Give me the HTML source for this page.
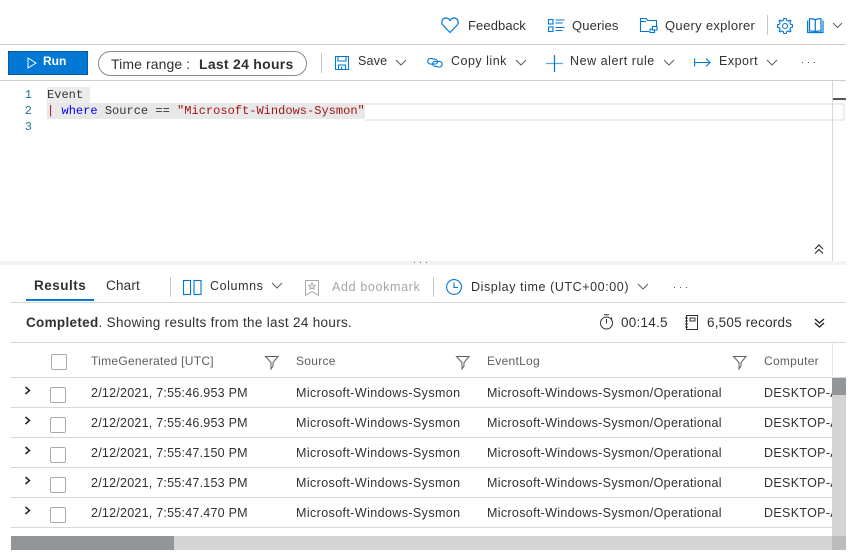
<!DOCTYPE html>
<html><head><meta charset="utf-8">
<style>
html,body{margin:0;padding:0;background:#fff;width:852px;height:559px;overflow:hidden}
body{position:relative;font-family:"Liberation Sans",sans-serif;color:#323130}
.t{position:absolute;white-space:nowrap;line-height:16px;font-size:13px}
.b{position:absolute}
svg{position:absolute;overflow:visible;fill:none}
.m{font-family:"Liberation Mono",monospace;font-size:12px;position:absolute;white-space:pre;line-height:16px}
.r{font-size:12.5px;color:#323130}
.d{letter-spacing:.24px}
.s{letter-spacing:.4px}
.e{letter-spacing:.33px}
.h{font-size:12px;color:#605e5c;letter-spacing:.28px}
.cb{position:absolute;width:14px;height:14px;border:1px solid #a6abb3;border-radius:2px;background:#fff}
.tb{font-size:12.5px}
</style></head><body>

<!-- top bar -->
<svg style="left:441px;top:17px" width="18" height="17" stroke="#0078d4" stroke-width="1.2"><path d="M9 15.5 L1.800 8 C-.5 5 1.500 1 5 1 C7 1 8.200 2 9 3.500 C9.800 2 11 1 13 1 C16.500 1 18.500 5 16.200 8 Z"/></svg>
<div class="t" style="left:468px;top:18px;letter-spacing:.1px">Feedback</div>
<svg style="left:548px;top:19px" width="17" height="14" stroke="#0078d4" stroke-width="1.1"><rect x=".5" y=".5" width="4.500" height="4.500"/><rect x=".5" y="8" width="4.500" height="4.500"/><path d="M7.500 1h9M7.500 4h7M7.500 8.500h9M7.500 11.500h7"/></svg>
<div class="t" style="left:572px;top:18px;letter-spacing:.15px">Queries</div>
<svg style="left:640px;top:18px" width="18" height="16" stroke="#0078d4" stroke-width="1.1"><path d="M9 13.500H.5V.5H6L7.500 2.500H16.500V9"/><path d="M.5 3.500H6"/><rect x="10" y="11" width="4.500" height="3.500"/><rect x="12.500" y="8.500" width="4.500" height="3.500" fill="#fff"/></svg>
<div class="t" style="left:665px;top:18px;letter-spacing:.3px">Query explorer</div>
<div class="b" style="left:767px;top:15px;width:1px;height:20px;background:#c8c8c8"></div>
<svg style="left:777px;top:18px" width="16" height="16" stroke="#0078d4" stroke-width="1.1"><circle cx="8" cy="8" r="2.500"/><path d="M6.800 .5H9.200L9.700 2.400 11.300 3.100 13 2.100 13.900 3 12.900 4.700 13.600 6.300 15.500 6.800V9.200L13.600 9.700 12.900 11.300 13.900 13 13 13.900 11.300 12.900 9.700 13.600 9.200 15.500H6.800L6.300 13.600 4.700 12.900 3 13.900 2.100 13 3.100 11.300 2.400 9.700 .5 9.200V6.800L2.400 6.300 3.100 4.700 2.100 3 3 2.100 4.700 3.100 6.300 2.400Z"/></svg>
<svg style="left:807px;top:18px" width="17" height="16" stroke="#0078d4" stroke-width="1.200"><path d="M.6 2.500V14.500H16V2.500"/><path d="M2.500 13V.8C5 .6 7 .8 8.300 2C9.600 .8 11.600 .6 14 .8V13C11.600 12.800 9.600 13 8.300 14C7 13 5 12.800 2.500 13ZM8.300 2V14"/></svg>
<svg style="left:832px;top:22px" width="11" height="7" stroke="#605e5c" stroke-width="1"><path d="M1 1l4.500 4.500L10 1"/></svg>

<div class="b" style="left:0;top:44px;width:846px;height:1px;background:#cfcfcf"></div>

<!-- toolbar -->
<div class="b" style="left:8px;top:51px;width:80px;height:24px;background:#0078d4;outline:1px dotted #0b3f78;outline-offset:-1px"></div>
<svg style="left:27px;top:57px" width="10" height="12" stroke="#fff" stroke-width="1"><path d="M1 1L9 6L1 11Z"/></svg>
<div class="t" style="left:43px;top:53px;color:#fff;font-weight:bold;font-size:12px">Run</div>
<div class="b" style="left:98px;top:51px;width:207px;height:23px;border:1px solid #8a8886;border-radius:13px"></div>
<div class="t" style="left:111px;top:56px;font-size:14px;letter-spacing:.1px">Time range :</div>
<div class="t" style="left:199px;top:56px;font-size:14px;font-weight:bold;letter-spacing:.27px">Last 24 hours</div>
<div class="b" style="left:321px;top:53px;width:1px;height:20px;background:#c8c8c8"></div>
<svg style="left:335px;top:56px" width="14" height="14" stroke="#0078d4" stroke-width="1.100"><path d="M.5.500H13.500V13.500H.5ZM3 .5V5H11V.5M3.500 13.500V9H10.500V13.500M6.500 10.500V13"/></svg>
<div class="t tb" style="left:358px;top:53px;letter-spacing:.2px">Save</div>
<svg style="left:395px;top:59px" width="12" height="7" stroke="#605e5c" stroke-width="1"><path d="M1 1l5 5 5-5"/></svg>
<svg style="left:427px;top:56px" width="16" height="13" stroke="#0078d4" stroke-width="1.100"><path d="M6 2.500H3.500a2.800 2.800 0 0 0 0 5.600H8a2.500 2.500 0 0 0 0-5H5.500"/><path d="M10 10.500h2.500a2.800 2.800 0 0 0 0-5.600H8a2.500 2.500 0 0 0 0 5h2.500" transform="translate(0 .5)"/></svg>
<div class="t tb" style="left:451px;top:53px;letter-spacing:.5px">Copy link</div>
<svg style="left:515px;top:59px" width="12" height="7" stroke="#605e5c" stroke-width="1"><path d="M1 1l5 5 5-5"/></svg>
<svg style="left:546px;top:55px" width="17" height="17" stroke-width="1.200"><path d="M0 8.500H17" stroke="#5aa9e6"/><path d="M8.500 0V17" stroke="#0078d4"/></svg>
<div class="t tb" style="left:570px;top:53px;letter-spacing:.55px">New alert rule</div>
<svg style="left:663px;top:59px" width="12" height="7" stroke="#605e5c" stroke-width="1"><path d="M1 1l5 5 5-5"/></svg>
<svg style="left:694px;top:57px" width="17" height="11" stroke="#0078d4" stroke-width="1.100"><path d="M.6 1.500V9.500M.6 5.500H16M12 1.500l4 4-4 4"/></svg>
<div class="t tb" style="left:719px;top:53px;letter-spacing:.5px">Export</div>
<svg style="left:766px;top:59px" width="12" height="7" stroke="#605e5c" stroke-width="1"><path d="M1 1l5 5 5-5"/></svg>
<svg style="left:801px;top:62px" width="15" height="2" fill="none"><path d="M1 0h1v1H1zM7 0h1v1H7zM13 0h1v1h-1z" fill="#555"/></svg>

<div class="b" style="left:0;top:80px;width:846px;height:1px;background:#cfcfcf"></div>

<!-- editor -->
<div class="b" style="left:47px;top:87px;width:43px;height:16px;background:#ececec"></div>
<div class="b" style="left:47px;top:103px;width:318px;height:16px;background:#e8e8e8"></div>
<div class="b" style="left:365px;top:103px;width:478px;height:14px;border:2px solid #eeeeee;border-left:0"></div>
<div class="b" style="left:832px;top:81px;width:1px;height:180px;background:#d8d8d8"></div>
<div class="b" style="left:833px;top:98px;width:13px;height:2px;background:#555"></div>
<div class="m" style="left:24px;top:87px;color:#237893;width:8px;text-align:right">1</div>
<div class="m" style="left:24px;top:103px;color:#237893;width:8px;text-align:right">2</div>
<div class="m" style="left:24px;top:119px;color:#237893;width:8px;text-align:right">3</div>
<div class="m" style="left:47px;top:87px;color:#333;letter-spacing:.02px">Event</div>
<div class="m" style="left:47px;top:103px;letter-spacing:.02px"><span style="color:#a31515">|</span> <span style="color:#0000ff">where</span> <span style="color:#333">Source == </span><span style="color:#a31515">"Microsoft-Windows-Sysmon"</span></div>
<svg style="left:814px;top:244px" width="10" height="10" stroke="#333" stroke-width="1.200"><path d="M1 5l4-4 4 4M1 9.500l4-4 4 4"/></svg>

<!-- splitter -->
<div class="b" style="left:0;top:261px;width:846px;height:4px;background:#f3f3f3"></div>
<svg style="left:414px;top:262px" width="14" height="2"><path d="M0 0h1v1H0zM6 0h1v1H6zM12 0h1v1h-1z" fill="#666"/></svg>

<!-- results tabs -->
<div class="t" style="left:34px;top:278px;font-weight:bold;font-size:13.500px;letter-spacing:.5px">Results</div>
<div class="t" style="left:106px;top:278px;font-size:13.500px;letter-spacing:.2px">Chart</div>
<div class="b" style="left:26px;top:299px;width:68px;height:2px;background:#0078d4"></div>
<div class="b" style="left:11px;top:302px;width:835px;height:1px;background:#d6d6d6"></div>
<div class="b" style="left:170px;top:277px;width:1px;height:20px;background:#c8c8c8"></div>
<svg style="left:183px;top:280px" width="19" height="15" stroke="#0078d4" stroke-width="1.100"><rect x=".5" y=".5" width="7" height="14"/><rect x="11" y=".5" width="7" height="14"/></svg>
<div class="t tb" style="left:210px;top:278px;letter-spacing:.6px">Columns</div>
<svg style="left:271px;top:282px" width="12" height="7" stroke="#605e5c" stroke-width="1"><path d="M1 1l5 5 5-5"/></svg>
<svg style="left:305px;top:280px" width="14" height="16" stroke="#a8a8a8" stroke-width="1"><path d="M.5.500H13.500V15.500L7 11.500L.5 15.500Z"/><path d="M7 3l1 2.200 2.200.2-1.700 1.500.5 2.200L7 7.900 5 9.100l.5-2.200L3.800 5.400 6 5.200Z"/></svg>
<div class="t tb" style="left:332px;top:279px;letter-spacing:.65px;color:#a6a6a6">Add bookmark</div>
<div class="b" style="left:433px;top:277px;width:1px;height:20px;background:#c8c8c8"></div>
<svg style="left:446px;top:279px" width="16" height="16" stroke="#0078d4" stroke-width="1.100"><circle cx="8" cy="8" r="7.400"/><path d="M8 3.500V8.500H12"/></svg>
<div class="t tb" style="left:471px;top:279px;letter-spacing:.58px">Display time (UTC+00:00)</div>
<svg style="left:637px;top:283px" width="12" height="7" stroke="#605e5c" stroke-width="1"><path d="M1 1l5 5 5-5"/></svg>
<svg style="left:673px;top:287px" width="15" height="2"><path d="M1 0h1v1H1zM7 0h1v1H7zM13 0h1v1h-1z" fill="#555"/></svg>

<!-- status -->
<div class="t" style="left:26px;top:315px;font-size:13.500px;letter-spacing:.31px"><b>Completed</b>. Showing results from the last 24 hours.</div>
<svg style="left:599px;top:314px" width="15" height="16" stroke="#323130" stroke-width="1"><circle cx="7.500" cy="9" r="6"/><path d="M7.500 5V9.500M5 .8H10M12 3.500l1.200 1.200"/></svg>
<div class="t" style="left:621px;top:315px;font-size:13.500px;letter-spacing:.25px">00:14.5</div>
<svg style="left:685px;top:315px" width="13" height="15" stroke="#323130" stroke-width="1"><path d="M1.500.5H12.500V14.500H1.500ZM0 3H3M0 6H3M0 9H3M0 12H3M5 3H10V6H5Z"/></svg>
<div class="t" style="left:707px;top:315px;font-size:13.500px;letter-spacing:.2px">6,505 records</div>
<svg style="left:814px;top:318px" width="11" height="10" stroke="#222" stroke-width="1.300"><path d="M1 1l4.500 4L10 1M1 5l4.500 4L10 5"/></svg>
<div class="b" style="left:11px;top:342px;width:835px;height:1px;background:#d6d6d6"></div>

<!-- header -->
<div class="cb" style="left:51px;top:354px"></div>
<div class="t h" style="left:91px;top:353px">TimeGenerated [UTC]</div>
<svg style="left:265px;top:356px" width="14" height="14" stroke="#605e5c" stroke-width="1"><path d="M.5.500H13L8 6.500V10L6 13V6.500Z"/></svg>
<div class="t h" style="left:296px;top:353px">Source</div>
<svg style="left:456px;top:356px" width="14" height="14" stroke="#605e5c" stroke-width="1"><path d="M.5.500H13L8 6.500V10L6 13V6.500Z"/></svg>
<div class="t h" style="left:487px;top:353px">EventLog</div>
<svg style="left:733px;top:356px" width="14" height="14" stroke="#605e5c" stroke-width="1"><path d="M.5.500H13L8 6.500V10L6 13V6.500Z"/></svg>
<div class="t h" style="left:764px;top:353px">Computer</div>
<div class="b" style="left:11px;top:377px;width:835px;height:1px;background:#d6d6d6"></div>
<div class="b" style="left:832px;top:343px;width:1px;height:35px;background:#e6e6e6"></div>

<!-- rows -->
<svg style="left:24px;top:386px" width="8" height="10" stroke="#222" stroke-width="1.500"><path d="M1.500 1l4 3.500-4 3.500"/></svg>
<div class="cb" style="left:50px;top:387px"></div>
<div class="t r d" style="left:91px;top:385px">2/12/2021, 7:55:46.953 PM</div>
<div class="t r s" style="left:296px;top:385px">Microsoft-Windows-Sysmon</div>
<div class="t r e" style="left:487px;top:385px">Microsoft-Windows-Sysmon/Operational</div>
<div class="t r e" style="left:764px;top:385px">DESKTOP-A</div>
<div class="b" style="left:11px;top:407px;width:821px;height:1px;background:#d6d6d6"></div>

<svg style="left:24px;top:416px" width="8" height="10" stroke="#222" stroke-width="1.500"><path d="M1.500 1l4 3.500-4 3.500"/></svg>
<div class="cb" style="left:50px;top:417px"></div>
<div class="t r d" style="left:91px;top:415px">2/12/2021, 7:55:46.953 PM</div>
<div class="t r s" style="left:296px;top:415px">Microsoft-Windows-Sysmon</div>
<div class="t r e" style="left:487px;top:415px">Microsoft-Windows-Sysmon/Operational</div>
<div class="t r e" style="left:764px;top:415px">DESKTOP-A</div>
<div class="b" style="left:11px;top:437px;width:821px;height:1px;background:#d6d6d6"></div>

<svg style="left:24px;top:446px" width="8" height="10" stroke="#222" stroke-width="1.500"><path d="M1.500 1l4 3.500-4 3.500"/></svg>
<div class="cb" style="left:50px;top:447px"></div>
<div class="t r d" style="left:91px;top:445px">2/12/2021, 7:55:47.150 PM</div>
<div class="t r s" style="left:296px;top:445px">Microsoft-Windows-Sysmon</div>
<div class="t r e" style="left:487px;top:445px">Microsoft-Windows-Sysmon/Operational</div>
<div class="t r e" style="left:764px;top:445px">DESKTOP-A</div>
<div class="b" style="left:11px;top:467px;width:821px;height:1px;background:#d6d6d6"></div>

<svg style="left:24px;top:476px" width="8" height="10" stroke="#222" stroke-width="1.500"><path d="M1.500 1l4 3.500-4 3.500"/></svg>
<div class="cb" style="left:50px;top:477px"></div>
<div class="t r d" style="left:91px;top:475px">2/12/2021, 7:55:47.153 PM</div>
<div class="t r s" style="left:296px;top:475px">Microsoft-Windows-Sysmon</div>
<div class="t r e" style="left:487px;top:475px">Microsoft-Windows-Sysmon/Operational</div>
<div class="t r e" style="left:764px;top:475px">DESKTOP-A</div>
<div class="b" style="left:11px;top:497px;width:821px;height:1px;background:#d6d6d6"></div>

<svg style="left:24px;top:506px" width="8" height="10" stroke="#222" stroke-width="1.500"><path d="M1.500 1l4 3.500-4 3.500"/></svg>
<div class="cb" style="left:50px;top:507px"></div>
<div class="t r d" style="left:91px;top:505px">2/12/2021, 7:55:47.470 PM</div>
<div class="t r s" style="left:296px;top:505px">Microsoft-Windows-Sysmon</div>
<div class="t r e" style="left:487px;top:505px">Microsoft-Windows-Sysmon/Operational</div>
<div class="t r e" style="left:764px;top:505px">DESKTOP-A</div>
<div class="b" style="left:11px;top:527px;width:821px;height:1px;background:#d6d6d6"></div>

<!-- scrollbars -->
<div class="b" style="left:832px;top:378px;width:20px;height:181px;background:#fff"></div>
<div class="b" style="left:832px;top:378px;width:14px;height:172px;background:#d4d4d4"></div>
<div class="b" style="left:832px;top:378px;width:14px;height:17px;background:#929699"></div>
<div class="b" style="left:11px;top:536px;width:821px;height:14px;background:#d4d4d4"></div>
<div class="b" style="left:11px;top:536px;width:163px;height:14px;background:#929699"></div>
<div class="b" style="left:832px;top:536px;width:14px;height:14px;background:#bcbcbc"></div>
</body></html>
